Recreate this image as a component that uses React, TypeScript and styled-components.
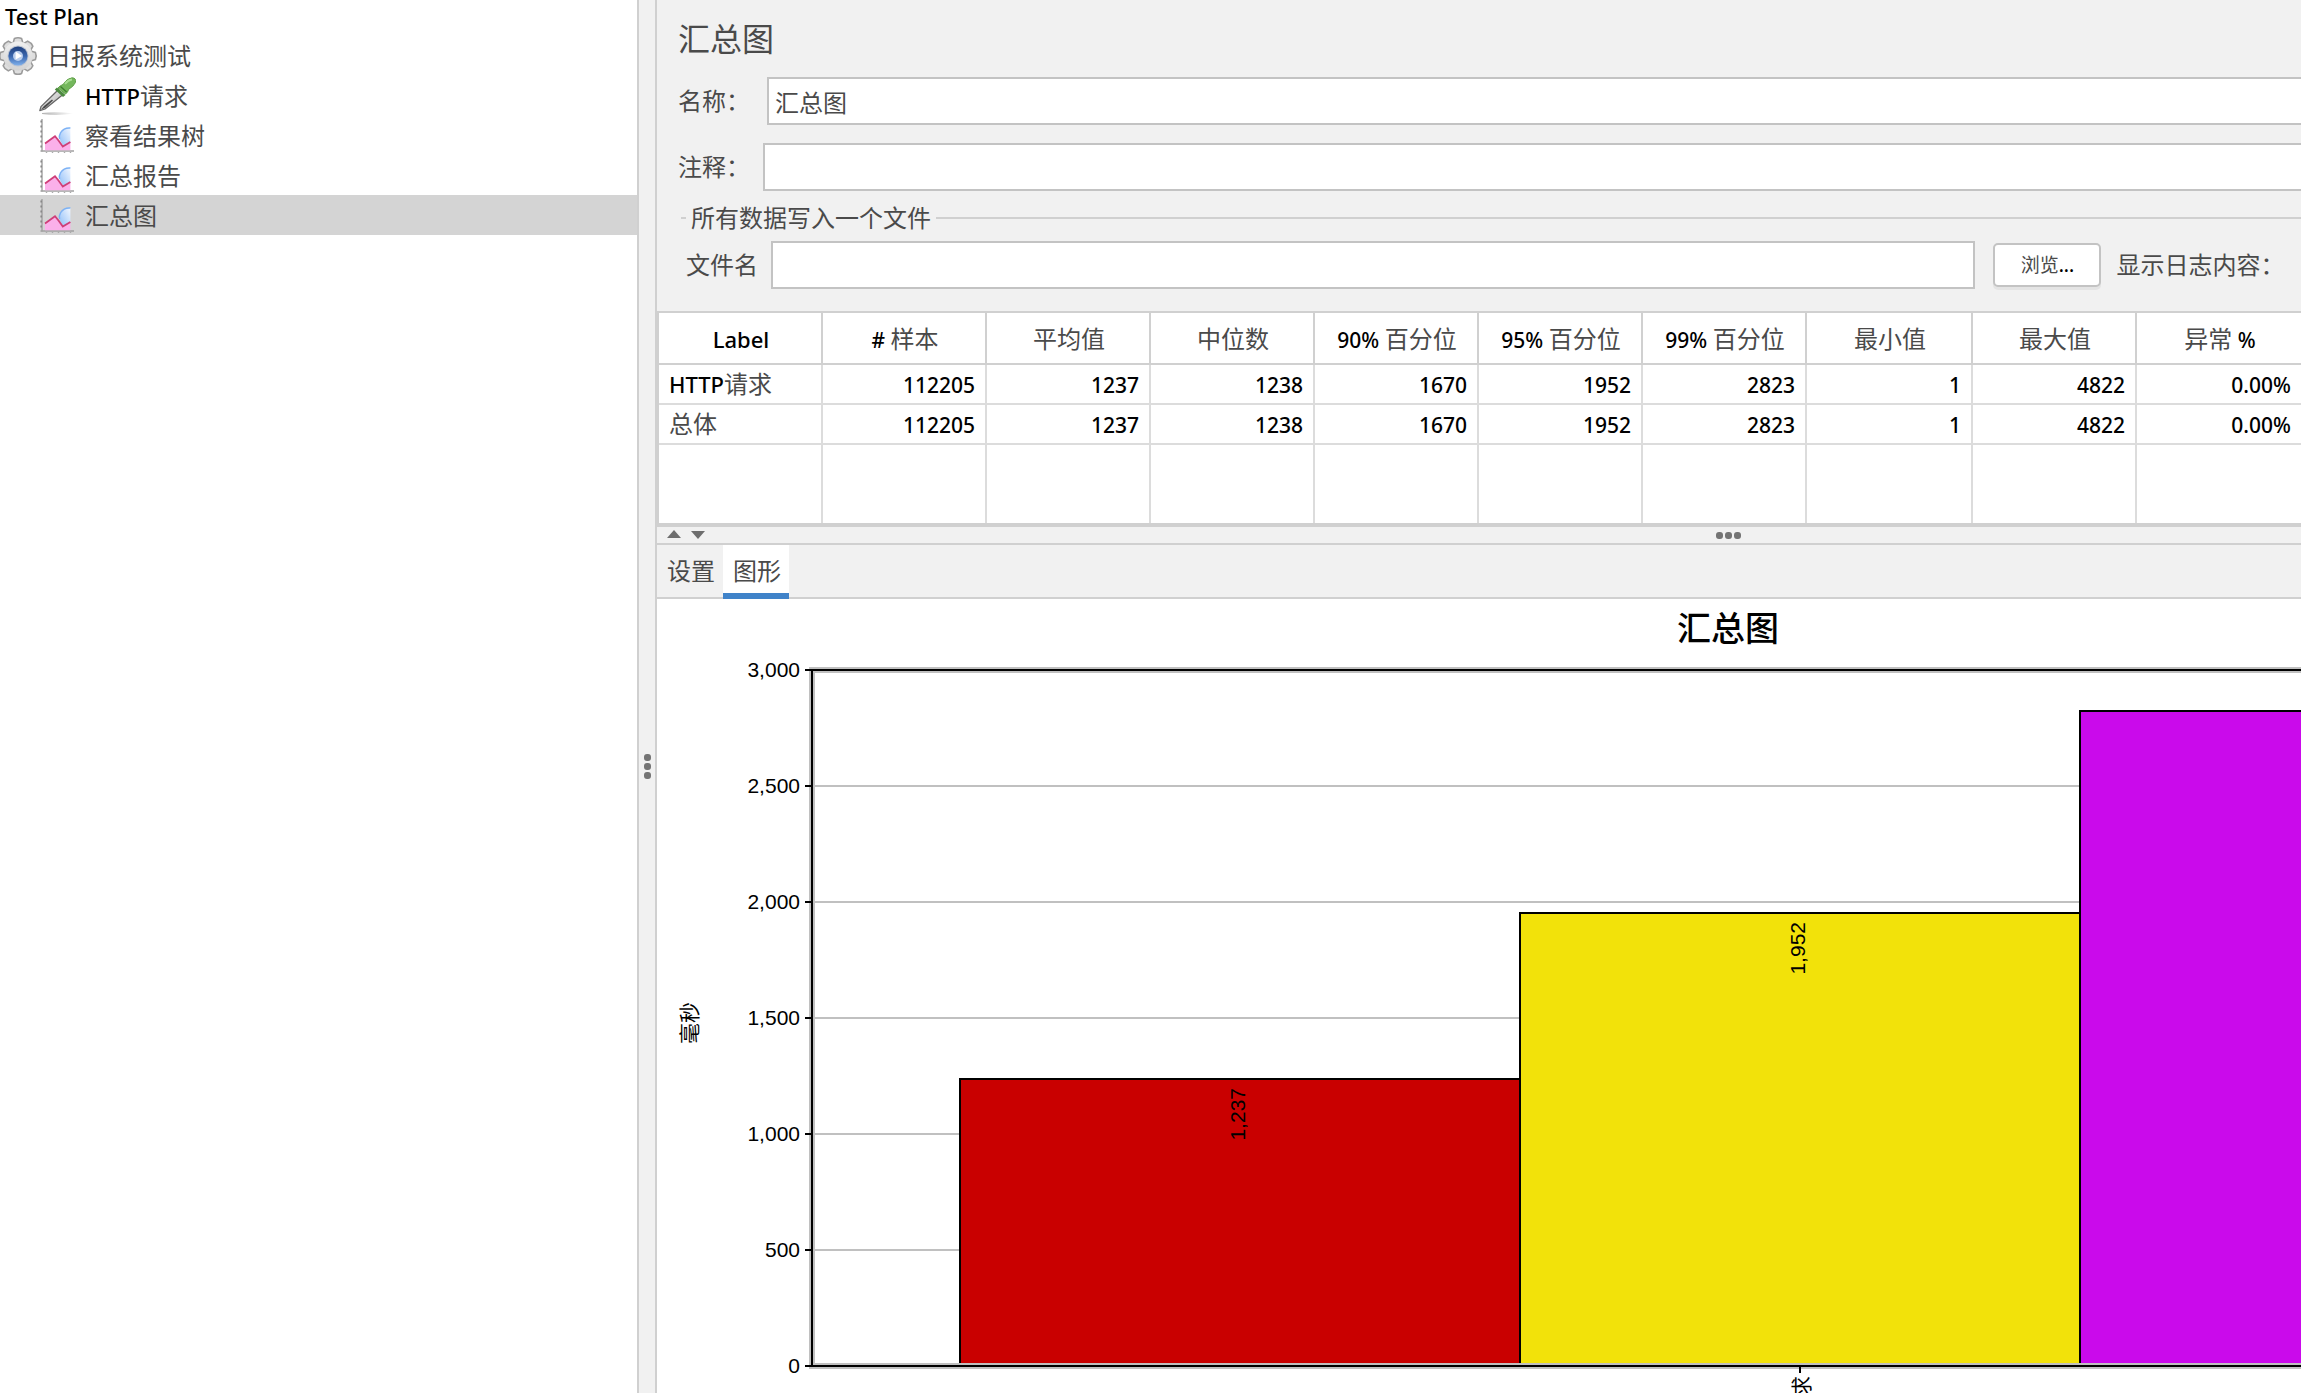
import React from "react";
import styled, { createGlobalStyle } from "styled-components";

const line = "#d0d0d0";
const panel = "#f1f1f1";
const ink = "#4a4a4a";

const GlobalStyle = createGlobalStyle`
  *, *::before, *::after { box-sizing: border-box; }
  html, body { margin: 0; height: 100%; overflow: hidden; background: #fff; }
  body, input, button, table {
    font-family: "Noto Sans", "Noto Sans CJK SC", sans-serif;
    font-size: 24px;
    line-height: 30px;
    color: ${ink};
  }
`;

const Viewport = styled.div`
  height: 100vh;
  overflow: hidden;
`;

const Window = styled.div`
  display: flex;
  min-width: 2799px;
  min-height: 1532px;
  background: #fff;
`;

const LatinText = styled.span<{ $size: number }>`
  font-size: ${(p) => p.$size}px;
  font-weight: 500;
  color: #000;
`;

function Label({ text, size = 22 }: { text: string; size?: number }) {
  const parts = text.match(/[\x20-\x7e]+|[^\x20-\x7e]+/g) ?? [];
  return (
    <>
      {parts.map((part, i) =>
        /^[\x20-\x7e]/.test(part) ? (
          <LatinText key={i} $size={size}>{part}</LatinText>
        ) : (
          <React.Fragment key={i}>{part}</React.Fragment>
        )
      )}
    </>
  );
}

/* ---------- test plan tree ---------- */

const Sidebar = styled.nav`
  flex: 0 0 637px;
  background: #fff;
`;

const Tree = styled.ul`
  margin: 0;
  padding: 0;
  list-style: none;
`;

const TreeRow = styled.li<{ $depth: number; $selected?: boolean }>`
  display: flex;
  align-items: center;
  gap: 9px;
  height: 40px;
  padding-top: 2px;
  padding-left: ${(p) => p.$depth * 38}px;
  white-space: nowrap;
  background: ${(p) => (p.$selected ? "#d4d4d4" : "transparent")};
`;

const RootRow = styled(TreeRow)`
  height: 35px;
  padding: 0 0 3px 5px;
`;

const Icon = styled.svg`
  display: block;
  flex: none;
  width: 38px;
  height: 38px;
`;

function GearIcon() {
  const teeth = [0, 45, 90, 135, 180, 225, 270, 315];
  return (
    <Icon viewBox="0 0 38 38" aria-hidden="true">
      <defs>
        <linearGradient id="gearBody" x1="0" y1="0" x2="0" y2="1">
          <stop offset="0" stopColor="#f0f0f0" />
          <stop offset="1" stopColor="#d2d2d2" />
        </linearGradient>
        <linearGradient id="gearHub" x1="0" y1="0" x2="0" y2="1">
          <stop offset="0" stopColor="#1f3f7c" />
          <stop offset="0.5" stopColor="#3a66ad" />
          <stop offset="1" stopColor="#7fb0ec" />
        </linearGradient>
      </defs>
      {teeth.map((a) => (
        <path
          key={a}
          d="M12.8 7 L14.4 1.6 Q18 0 21.6 1.6 L23.2 7 Z"
          transform={`rotate(${a} 18 19)`}
          fill="#dedede"
          stroke="#9c9c9c"
          strokeWidth="1.6"
        />
      ))}
      <circle cx="18" cy="19" r="14.6" fill="url(#gearBody)" />
      <circle cx="18" cy="19" r="10.5" fill="#bcc4d2" />
      <circle cx="18" cy="19" r="9.6" fill="url(#gearHub)" />
      <circle cx="18" cy="19" r="5" fill="#b9cdec" />
      <path d="M15.6 14.6 L22 19 L15.6 22.4 Z" fill="#fff" />
    </Icon>
  );
}

function DropperIcon() {
  return (
    <Icon viewBox="0 0 38 38" aria-hidden="true">
      <defs>
        <linearGradient id="glass" x1="0" y1="0" x2="1" y2="1">
          <stop offset="0" stopColor="#ffffff" />
          <stop offset="1" stopColor="#a5a5a5" />
        </linearGradient>
        <linearGradient id="ground" x1="0" y1="0" x2="1" y2="0">
          <stop offset="0" stopColor="#b4b4b4" />
          <stop offset="1" stopColor="#ffffff" />
        </linearGradient>
      </defs>
      <path d="M4 36 Q18 34.5 36 36.5 Q20 39 4 37 Z" fill="url(#ground)" />
      <path d="M1.8 33.6 L3 29.6 L20 13 L25 17.6 L7 32 Z" fill="url(#glass)" stroke="#666" strokeWidth="1.3" strokeLinejoin="round" />
      <path d="M3 32.5 L6 29 L14 22.4 L15 23.4 L7 31 Z" fill="#4a4a4a" />
      <path d="M19 10.5 L27.5 18 L25 20 L16.8 12.6 Z" fill="#4c8a3f" />
      <path d="M20 11 Q22 8.5 25 7.5 Q29 1.2 34 0.8 Q38.6 1 37.4 5.6 Q35.6 9.4 30.6 12.4 Q30 15 27.6 17 Z" fill="#74b75c" stroke="#5f9f48" />
      <path d="M27 7 Q30 3 34 2.6" stroke="#a8dc93" strokeWidth="2" fill="none" />
      <path d="M22.5 9.5 L28.6 15" stroke="#3f8031" strokeWidth="1.4" />
    </Icon>
  );
}

function GraphIcon() {
  return (
    <Icon viewBox="0 0 38 38" aria-hidden="true">
      <defs>
        <linearGradient id="sphere" x1="1" y1="0" x2="0" y2="1">
          <stop offset="0" stopColor="#f2f7ff" />
          <stop offset="1" stopColor="#8dbdf8" />
        </linearGradient>
      </defs>
      <path d="M4 2 V34.5" stroke="#a0a0a0" strokeWidth="1.4" />
      <path d="M2.4 4.5 H4 M2.4 9.5 H4 M2.4 14.5 H4 M2.4 19.5 H4 M2.4 24.5 H4 M2.4 29.5 H4" stroke="#888" strokeWidth="2" />
      <path d="M2.5 34 H36" stroke="#a0a0a0" strokeWidth="1.4" />
      <path d="M8.5 35 V36 M14.5 35 V36 M20.5 35 V36 M26.5 35 V36 M32.5 35 V36" stroke="#aaa" strokeWidth="1.4" />
      <path d="M32.4 11 Q26 10.4 22.6 15.6 Q20.4 19.6 22.4 24 L26 30 L32.4 25 Z" fill="url(#sphere)" />
      <path d="M32.4 11 Q26 10.4 22.6 15.6 Q20.6 19 21.6 22" fill="none" stroke="#7db2f5" strokeWidth="1.4" />
      <path d="M7 26.5 L17 19 L24.5 29.5 L32.4 25.5 V33.2 H7 Z" fill="#fbb0ea" />
      <path d="M7 26.5 L17 19.2 L20.5 23.5 L24.8 29.6 L32.4 25" fill="none" stroke="#cf3f78" strokeWidth="1.8" />
    </Icon>
  );
}

/* ---------- splitters ---------- */

const SideSplitter = styled.div`
  display: flex;
  flex: 0 0 20px;
  align-items: center;
  justify-content: center;
  background: ${panel};
  border: solid ${line};
  border-width: 0 2px;
`;

const Grip = styled.div<{ $vertical?: boolean }>`
  display: flex;
  flex-direction: ${(p) => (p.$vertical ? "column" : "row")};
  gap: 2px;
`;

const Dot = styled.i`
  width: 7px;
  height: 7px;
  border-radius: 3px;
  background: #747474;
`;

const StackSplitter = styled.div`
  display: grid;
  grid-template-columns: 1fr auto 1fr;
  align-items: center;
  height: 18px;
  background: ${panel};
  border-bottom: 2px solid ${line};
`;

const Collapsers = styled.div`
  display: flex;
  gap: 10px;
  padding-left: 10px;
`;

const Collapser = styled.button`
  display: block;
  width: 14px;
  height: 10px;
  padding: 0;
  border: 0;
  background: none;
  line-height: 0;
`;

function Dots({ vertical }: { vertical?: boolean }) {
  return (
    <Grip $vertical={vertical}>
      <Dot />
      <Dot />
      <Dot />
    </Grip>
  );
}

/* ---------- element form ---------- */

const Main = styled.main`
  display: flex;
  flex: 1;
  flex-direction: column;
  min-width: 0;
  background: ${panel};
`;

const Form = styled.form`
  padding: 16px 0 22px 21px;
`;

const Title = styled.h1`
  margin: 0 0 15px;
  font-size: 32px;
  line-height: 46px;
  font-weight: 400;
`;

const Field = styled.div<{ $gap: number }>`
  display: flex;
  align-items: center;
  gap: ${(p) => p.$gap}px;
  margin-bottom: 18px;
`;

const FieldLabel = styled.label`
  flex: none;
  white-space: nowrap;
`;

const TextBox = styled.input`
  flex: 1;
  min-width: 0;
  height: 48px;
  padding: 0 6px;
  border: 2px solid #c3c3c3;
  border-radius: 0;
  background: #fff;
  outline: none;
`;

const FileGroup = styled.fieldset`
  min-width: 0;
  margin: -3px 0 0 3px;
  padding: 11px 0 0 5px;
  border: 0;
  border-top: 2px solid ${line};
`;

const GroupTitle = styled.legend`
  padding: 0 5px;
  line-height: 24px;
`;

const FileRow = styled.div`
  display: flex;
  align-items: center;
  gap: 13px;
`;

const FileBox = styled(TextBox)`
  flex: 0 0 57%;
  margin-right: 5px;
`;

const BrowseButton = styled.button`
  width: 108px;
  height: 44px;
  margin-right: 2px;
  padding: 0;
  border: 2px solid #c3c3c3;
  border-radius: 5px;
  background: #fff;
  box-shadow: 0 3px 0 #e4e4e4;
  font-size: 19px;
`;

/* ---------- results table ---------- */

const TableFrame = styled.div`
  height: 216px;
  background: #fff;
  border: 2px solid ${line};
  border-right: 0;
  border-bottom-width: 4px;
`;

const Table = styled.table`
  width: 100%;
  height: 100%;
  table-layout: fixed;
  border-collapse: separate;
  border-spacing: 0;
`;

const Col = styled.col<{ $width?: number }>`
  width: ${(p) => (p.$width ? `${p.$width}px` : "auto")};
`;

const HeadCell = styled.th`
  height: 52px;
  padding: 2px 0 0 2px;
  border-right: 2px solid ${line};
  border-bottom: 2px solid ${line};
  font-weight: 400;
  white-space: nowrap;
`;

const Cell = styled.td<{ $numeric?: boolean }>`
  height: 40px;
  padding: 0 10px;
  border-right: 2px solid #dcdcdc;
  border-bottom: 2px solid #dcdcdc;
  text-align: ${(p) => (p.$numeric ? "right" : "left")};
  white-space: nowrap;
`;

const FillCell = styled.td`
  padding: 0;
  border-right: 2px solid #dcdcdc;
`;

const columns = [
  { title: "Label", width: 164 },
  { title: "# 样本", width: 164 },
  { title: "平均值", width: 164 },
  { title: "中位数", width: 164 },
  { title: "90% 百分位", width: 164 },
  { title: "95% 百分位", width: 164 },
  { title: "99% 百分位", width: 164 },
  { title: "最小值", width: 166 },
  { title: "最大值", width: 164 },
  { title: "异常 %", width: 166 },
];

const results = [
  ["HTTP请求", "112205", "1237", "1238", "1670", "1952", "2823", "1", "4822", "0.00%"],
  ["总体", "112205", "1237", "1238", "1670", "1952", "2823", "1", "4822", "0.00%"],
];

/* ---------- tabs and chart ---------- */

const Tabs = styled.div`
  display: flex;
  height: 54px;
  border-bottom: 2px solid ${line};
`;

const Tab = styled.button<{ $active?: boolean }>`
  height: 54px;
  padding: 4px 8px 0 10px;
  border: 0;
  border-bottom: 6px solid ${(p) => (p.$active ? "#4083c9" : "transparent")};
  background: ${(p) => (p.$active ? "#fff" : "transparent")};
  background-clip: padding-box;
`;

const ChartPane = styled.section`
  flex: 1;
  background: #fff;
`;

const Chart = styled.svg`
  display: block;
  width: 2142px;
  height: 930px;
`;

const AxisText = styled.text`
  font-family: "Liberation Sans", "Noto Sans CJK SC", sans-serif;
  font-size: 21px;
  fill: #000;
`;

const ChartTitle = styled.text`
  font-family: "Noto Sans CJK SC", sans-serif;
  font-size: 34px;
  font-weight: 500;
  fill: #000;
`;

const plot = { left: 155, right: 2131, top: 71, bottom: 767 };
const maxValue = 3000;
const yOf = (v: number) => Math.round(plot.bottom - (v / maxValue) * (plot.bottom - plot.top));

const ticks = [0, 500, 1000, 1500, 2000, 2500, 3000];
const bars = [
  { value: 1237, color: "#c90000", labelled: true },
  { value: 1952, color: "#f2e20a", labelled: true },
  { value: 2823, color: "#ca0aeb", labelled: false },
];
const barWidth = 560;
const firstBar = 303;
const middle = (plot.left + plot.right) / 2;

function AggregateChart() {
  return (
    <Chart viewBox="0 0 2142 930" role="img" aria-label="汇总图">
      <ChartTitle x={1071} y={42} textAnchor="middle">汇总图</ChartTitle>
      {ticks.map((t) => (
        <path key={t} d={`M${plot.left} ${yOf(t)} H${plot.right}`} stroke="#c0c0c0" strokeWidth="2" />
      ))}
      {bars.map((b, i) => {
        const x = firstBar + i * barWidth;
        const y = yOf(b.value);
        return (
          <g key={b.value}>
            <rect x={x} y={y} width={barWidth} height={plot.bottom - y} fill={b.color} stroke="#000" strokeWidth="2" />
            {b.labelled && (
              <AxisText textAnchor="end" transform={`translate(${x + barWidth / 2 + 5} ${y + 9}) rotate(-90)`}>
                {b.value.toLocaleString("en-US")}
              </AxisText>
            )}
          </g>
        );
      })}
      <rect
        x={plot.left}
        y={plot.top}
        width={plot.right - plot.left}
        height={plot.bottom - plot.top}
        fill="none"
        stroke="#c0c0c0"
        strokeWidth="6"
      />
      <rect
        x={plot.left}
        y={plot.top}
        width={plot.right - plot.left}
        height={plot.bottom - plot.top}
        fill="none"
        stroke="#000"
        strokeWidth="2"
      />
      {ticks.map((t) => (
        <g key={t}>
          <path d={`M${plot.left - 7} ${yOf(t)} H${plot.left}`} stroke="#000" strokeWidth="2" />
          <AxisText x={plot.left - 12} y={yOf(t) + 7} textAnchor="end">
            {t.toLocaleString("en-US")}
          </AxisText>
        </g>
      ))}
      <path d={`M${middle} ${plot.bottom} V${plot.bottom + 7}`} stroke="#000" strokeWidth="2" />
      <AxisText textAnchor="middle" transform="translate(40 424) rotate(-90)">毫秒</AxisText>
      <AxisText textAnchor="end" transform={`translate(${middle + 9} ${plot.bottom + 10}) rotate(-90)`}>
        HTTP请求
      </AxisText>
    </Chart>
  );
}

export default function App() {
  return (
    <Viewport>
      <GlobalStyle />
      <Window>
        <Sidebar>
          <Tree>
            <RootRow $depth={0}><span><Label text="Test Plan" /></span></RootRow>
            <TreeRow $depth={0}><GearIcon /><span>日报系统测试</span></TreeRow>
            <TreeRow $depth={1}><DropperIcon /><span><Label text="HTTP请求" /></span></TreeRow>
            <TreeRow $depth={1}><GraphIcon /><span>察看结果树</span></TreeRow>
            <TreeRow $depth={1}><GraphIcon /><span>汇总报告</span></TreeRow>
            <TreeRow $depth={1} $selected><GraphIcon /><span>汇总图</span></TreeRow>
          </Tree>
        </Sidebar>
        <SideSplitter><Dots vertical /></SideSplitter>
        <Main>
          <Form onSubmit={(e) => e.preventDefault()}>
            <Title>汇总图</Title>
            <Field $gap={17}>
              <FieldLabel htmlFor="name">名称：</FieldLabel>
              <TextBox id="name" defaultValue="汇总图" />
            </Field>
            <Field $gap={13}>
              <FieldLabel htmlFor="comment">注释：</FieldLabel>
              <TextBox id="comment" />
            </Field>
            <FileGroup>
              <GroupTitle>所有数据写入一个文件</GroupTitle>
              <FileRow>
                <FieldLabel htmlFor="file">文件名</FieldLabel>
                <FileBox id="file" />
                <BrowseButton type="button"><Label text="浏览..." size={19} /></BrowseButton>
                <span>显示日志内容：</span>
              </FileRow>
            </FileGroup>
          </Form>
          <TableFrame>
            <Table>
              <colgroup>
                {columns.map((c) => <Col key={c.title} $width={c.width} />)}
                <Col />
              </colgroup>
              <thead>
                <tr>
                  {columns.map((c) => (
                    <HeadCell key={c.title} scope="col"><Label text={c.title} size={c.title === "Label" ? 22 : 21} /></HeadCell>
                  ))}
                  <HeadCell as="td" />
                </tr>
              </thead>
              <tbody>
                {results.map((row) => (
                  <tr key={row[0]}>
                    {row.map((value, i) => (
                      <Cell key={i} $numeric={i > 0}><Label text={value} size={i > 0 ? 21 : 22} /></Cell>
                    ))}
                    <Cell />
                  </tr>
                ))}
                <tr>
                  {columns.map((c) => <FillCell key={c.title} />)}
                  <FillCell />
                </tr>
              </tbody>
            </Table>
          </TableFrame>
          <StackSplitter>
            <Collapsers>
              <Collapser type="button" aria-label="向上折叠">
                <svg width="14" height="10" viewBox="0 0 14 10"><path d="M7 0 L14 8 H0 Z" fill="#6e6e6e" /></svg>
              </Collapser>
              <Collapser type="button" aria-label="向下折叠">
                <svg width="14" height="10" viewBox="0 0 14 10"><path d="M0 1 H14 L7 9 Z" fill="#6e6e6e" /></svg>
              </Collapser>
            </Collapsers>
            <Dots />
          </StackSplitter>
          <Tabs>
            <Tab type="button">设置</Tab>
            <Tab type="button" $active>图形</Tab>
          </Tabs>
          <ChartPane>
            <AggregateChart />
          </ChartPane>
        </Main>
      </Window>
    </Viewport>
  );
}
